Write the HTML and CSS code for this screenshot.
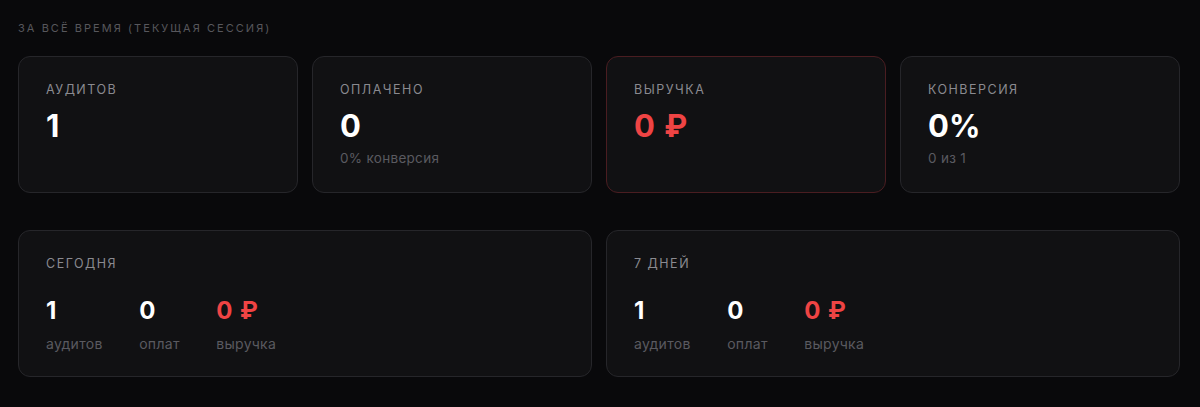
FILE: index.html
```html
<!DOCTYPE html>
<html lang="ru">
<head>
<meta name="viewport" content="width=device-width, initial-scale=1.0">
  <title>Статистика</title>
  <link rel="stylesheet" href="styles.css">
</head>
<body>

  <div class="stats">
    <div class="titulo">За всё время (текущая сессия)</div>

    <div class="fila-top">
      <div class="tarjeta">
        <div class="etiqueta">Аудитов</div>
        <div class="valor">1</div>
      </div>
      <div class="tarjeta">
        <div class="etiqueta">Оплачено</div>
        <div class="valor">0</div>
        <div class="nota">0% конверсия</div>
      </div>
      <div class="tarjeta tarjeta-roja">
        <div class="etiqueta">Выручка</div>
        <div class="valor rojo">0 ₽</div>
      </div>
      <div class="tarjeta">
        <div class="etiqueta">Конверсия</div>
        <div class="valor">0%</div>
        <div class="nota">0 из 1</div>
      </div>
    </div>

    <div class="fila-bottom">
      <div class="tarjeta tarjeta-periodo">
        <div class="etiqueta">Сегодня</div>
        <div class="mini-stats">
          <div class="mini">
            <div class="mini-valor">1</div>
            <div class="mini-texto">аудитов</div>
          </div>
          <div class="mini">
            <div class="mini-valor">0</div>
            <div class="mini-texto">оплат</div>
          </div>
          <div class="mini">
            <div class="mini-valor rojo">0 ₽</div>
            <div class="mini-texto">выручка</div>
          </div>
        </div>
      </div>
      <div class="tarjeta tarjeta-periodo">
        <div class="etiqueta">7 дней</div>
        <div class="mini-stats">
          <div class="mini">
            <div class="mini-valor">1</div>
            <div class="mini-texto">аудитов</div>
          </div>
          <div class="mini">
            <div class="mini-valor">0</div>
            <div class="mini-texto">оплат</div>
          </div>
          <div class="mini">
            <div class="mini-valor rojo">0 ₽</div>
            <div class="mini-texto">выручка</div>
          </div>
        </div>
      </div>
    </div>
  </div>

</body>
</html>
```

FILE: styles.css
```css
* {
  margin: 0;
  padding: 0;
  box-sizing: border-box;
}

body {
  background: #09090b;
  font-family: Inter, "Noto Sans", sans-serif;
  color: #ffffff;
}

.stats {
  padding: 21px 20px 0 18px;
}

.titulo {
  font-size: 11px;
  letter-spacing: 2.05px;
  text-transform: uppercase;
  color: #57575c;
  line-height: 14px;
  margin-bottom: 21px;
}

.fila-top {
  display: grid;
  grid-template-columns: repeat(4, 1fr);
  gap: 14px;
}

.fila-bottom {
  display: grid;
  grid-template-columns: repeat(2, 1fr);
  gap: 14px;
  margin-top: 37px;
}

.tarjeta {
  height: 137px;
  background: #111113;
  border: 1px solid #26262a;
  border-radius: 12px;
  padding: 25px 27px;
}

.tarjeta-roja {
  border-color: #4a1d21;
}

.tarjeta-periodo {
  height: 147px;
  padding-top: 25px;
}

.etiqueta {
  font-size: 12.5px;
  letter-spacing: 1.5px;
  text-transform: uppercase;
  color: #8a8a90;
  line-height: 16px;
}

.valor {
  font-size: 31px;
  font-weight: 700;
  line-height: 36px;
  margin-top: 10px;
  word-spacing: 2px;
}

.nota {
  font-size: 13.5px;
  letter-spacing: 0.3px;
  color: #5a5a60;
  margin-top: 6px;
  line-height: 16px;
}

.rojo {
  color: #ef4444;
}

.mini-stats {
  display: flex;
  gap: 36.5px;
  margin-top: 24px;
}

.mini-valor {
  font-size: 24px;
  font-weight: 700;
  line-height: 30px;
  word-spacing: 2px;
}

.mini-texto {
  font-size: 14px;
  letter-spacing: 0.3px;
  color: #5a5a60;
  margin-top: 10px;
  line-height: 16px;
}
```
